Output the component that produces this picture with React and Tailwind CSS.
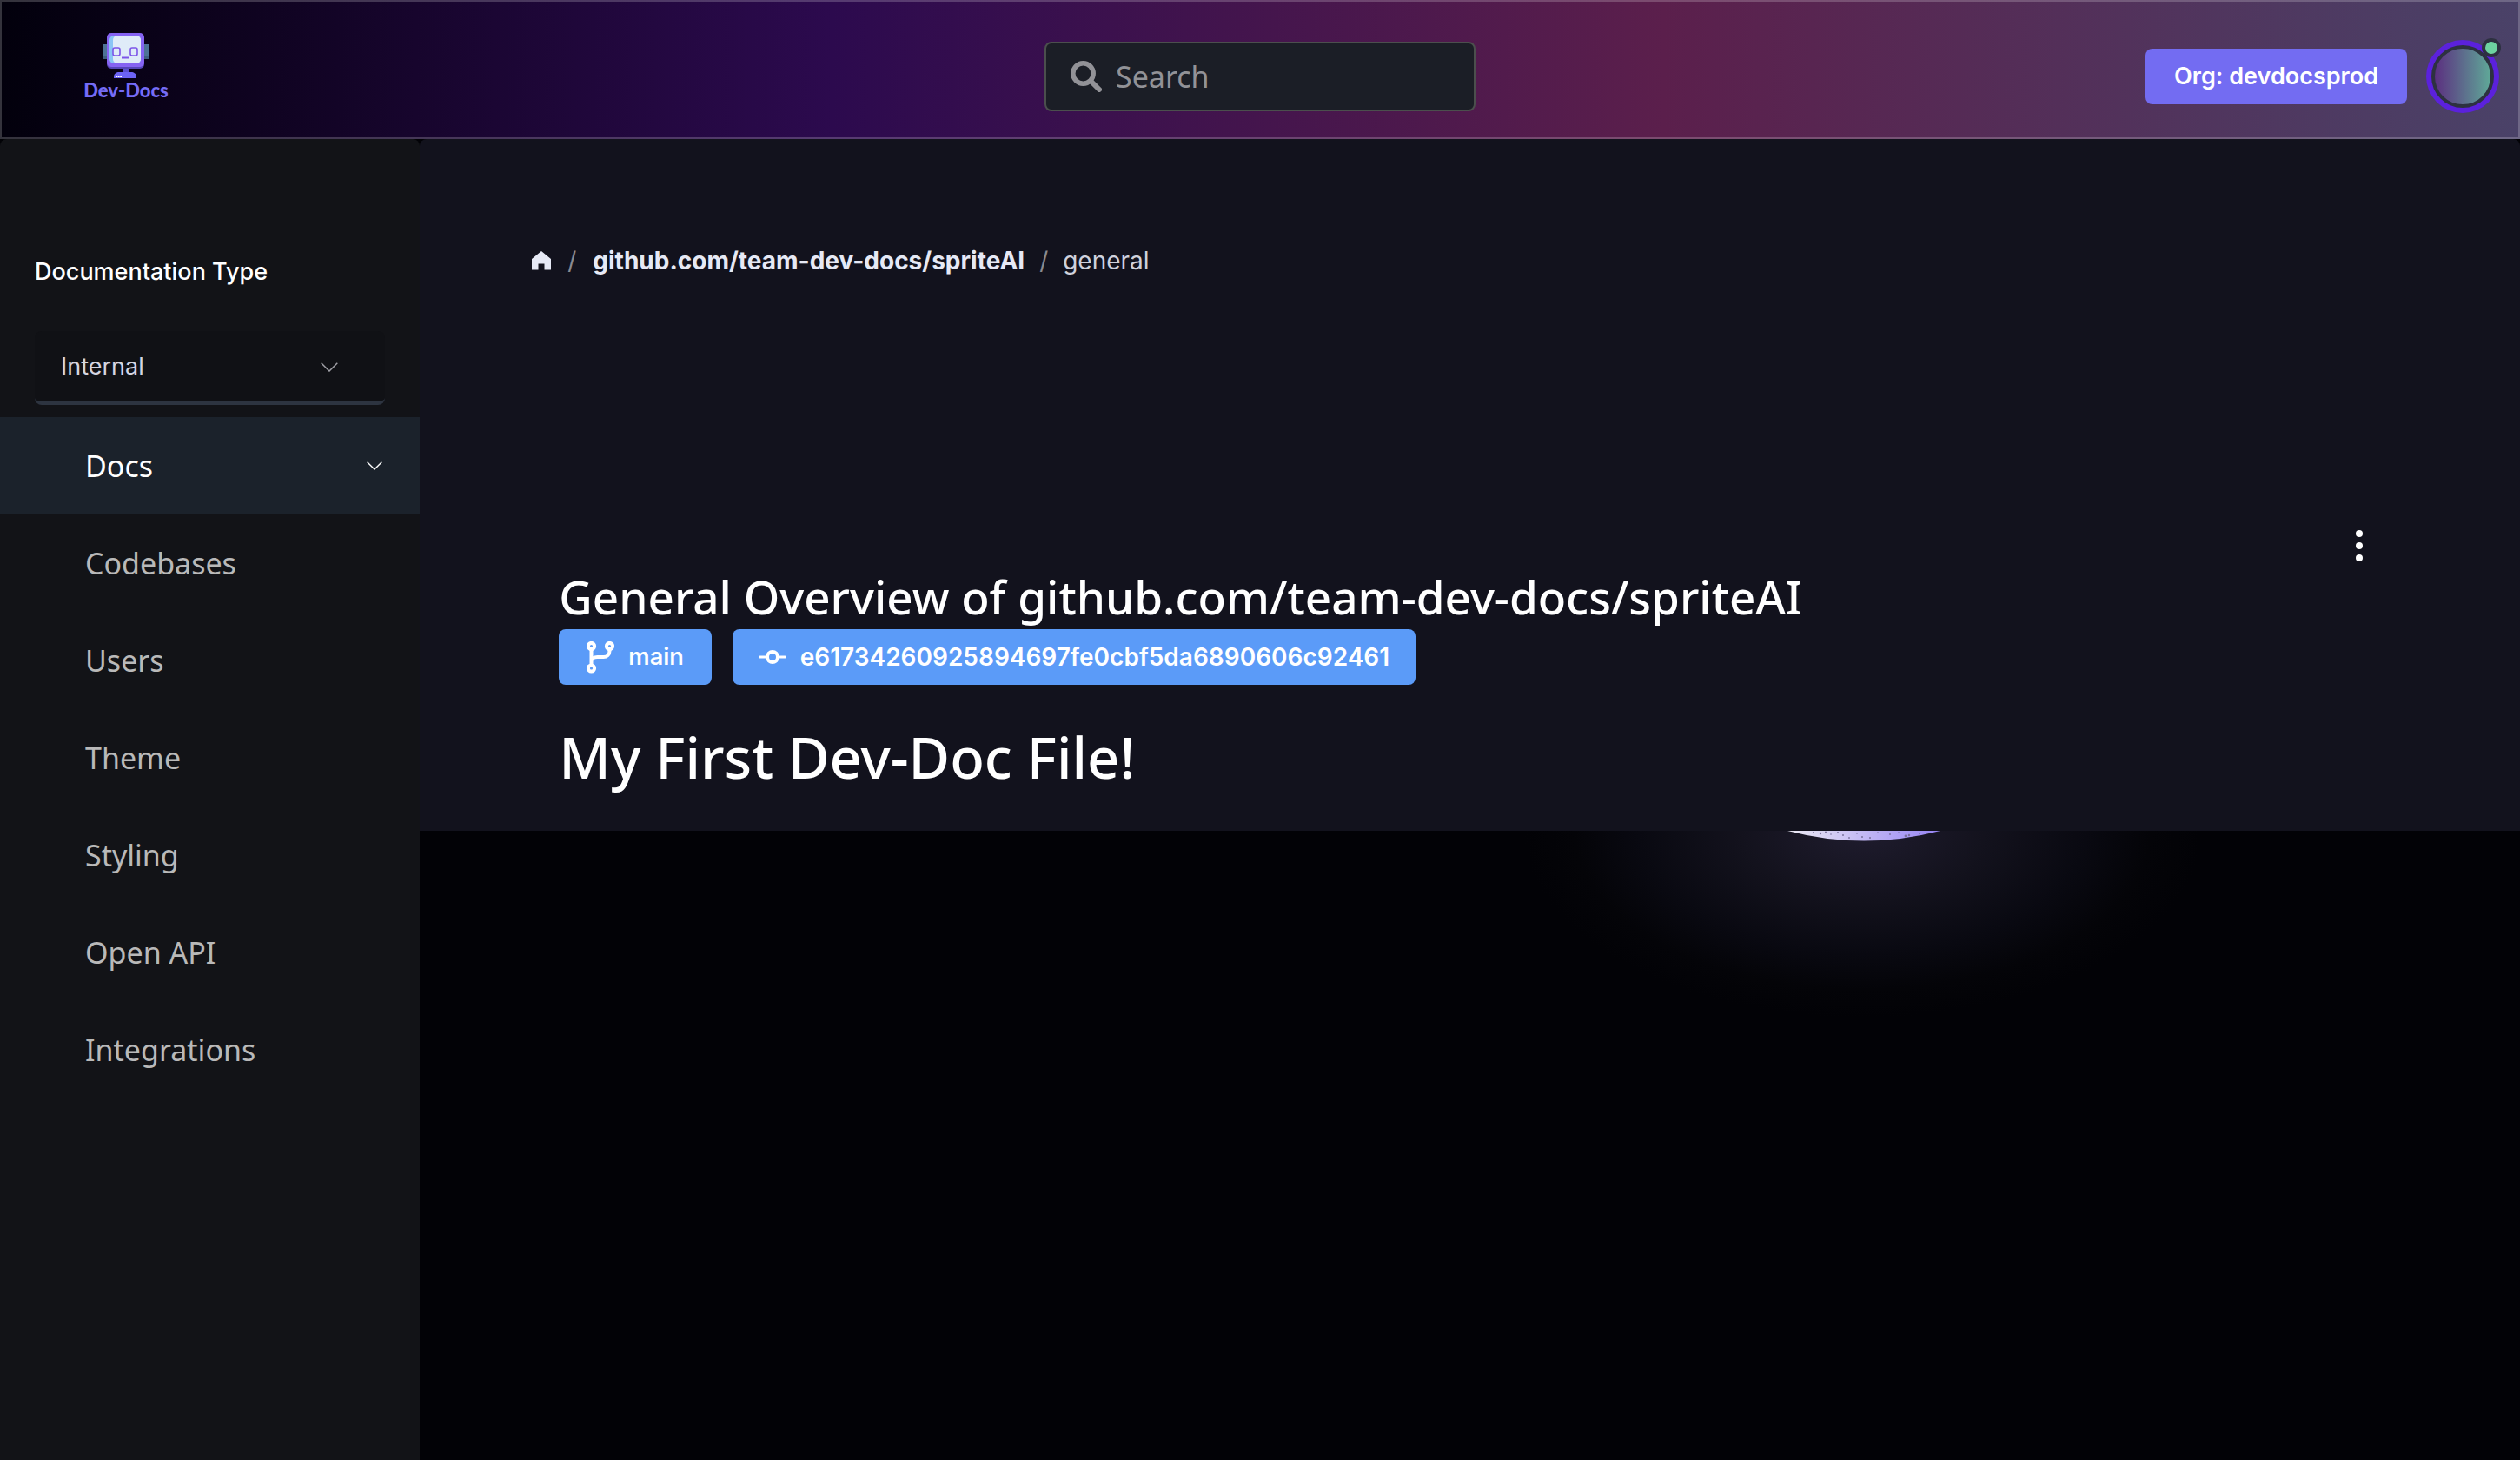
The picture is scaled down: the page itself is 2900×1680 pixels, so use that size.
import React from "react";

const navItems = ["Codebases", "Users", "Theme", "Styling", "Open API", "Integrations"];

function Logo() {
  return (
    <a href="#" className="ml-[72px] flex w-[98px] flex-col items-center text-[#756cf6]">
      <svg viewBox="0 0 54 52" className="h-[52px] w-[54px]" aria-hidden="true">
        <rect x="0" y="13" width="6" height="17" fill="#3f5f80" />
        <rect x="48" y="13" width="6" height="17" fill="#3f5f80" />
        <rect x="0" y="13" width="6" height="13" fill="#4d7396" />
        <rect x="48" y="13" width="6" height="13" fill="#4d7396" />
        <rect x="5" y="2" width="43" height="39" rx="5" fill="#5546b8" />
        <rect x="5" y="0" width="43" height="39" rx="5" fill="#8563f2" />
        <rect x="8" y="3" width="36" height="32" rx="5" fill="#8ac4f5" />
        <rect x="12" y="3" width="32" height="32" rx="5" fill="#dfebf8" />
        <rect x="12" y="17" width="8" height="9" rx="2" fill="none" stroke="#7d55e8" strokeWidth="1.6" />
        <rect x="32" y="17" width="8" height="9" rx="2" fill="none" stroke="#7d55e8" strokeWidth="1.6" />
        <rect x="22" y="27.5" width="8" height="2" fill="#7d55e8" />
        <rect x="23" y="41" width="7" height="6" fill="#5b4fd0" />
        <path d="M13 52v-2c0-3 3-5 6-5h14c3 0 6 2 6 5v2z" fill="#6d63f5" />
        <path d="M15 50h7" stroke="#fff" strokeWidth="2" strokeDasharray="2 .6" />
      </svg>
      <span className="font-['Lato'] text-[22px] leading-[28px] font-black whitespace-nowrap">Dev-Docs</span>
    </a>
  );
}

function Chevron({ className }) {
  return (
    <svg viewBox="0 0 20 11" className={className} fill="none" stroke="currentColor" strokeWidth="1.5" aria-hidden="true">
      <path d="M.7.7 10 10 19.3.7" />
    </svg>
  );
}

function Header() {
  return (
    <header className="flex h-40 items-center justify-between border-2 border-white/20 bg-[linear-gradient(90deg,#02000c_0%,#2c0a4e_33%,#5b1f4c_66%,#4a4268_100%)] bg-origin-border px-[22px]">
      <div className="flex flex-1 pb-1">
        <Logo />
      </div>
      <label className="mt-4 flex h-20 w-[496px] items-center gap-4 rounded-lg border-2 border-[#4b4f4d] bg-[#1b1e26] px-7 text-[#929297]">
        <svg viewBox="0 0 36 36" className="size-9 shrink-0" fill="none" stroke="currentColor" aria-hidden="true">
          <circle cx="14.5" cy="14.5" r="11.7" strokeWidth="5.5" />
          <path d="m23.5 23.5 9.5 9.5" strokeWidth="6" strokeLinecap="round" />
        </svg>
        <input type="search" aria-label="Search" placeholder="Search" className="w-full min-w-0 bg-transparent text-[34px] outline-none placeholder:text-[#929297]" />
      </label>
      <div className="mt-4 flex flex-1 items-center justify-end gap-[22px] font-['Inter']">
        <button className="h-16 rounded-lg bg-[#736cf2] px-[33px] text-[27px] font-semibold text-white">Org: devdocsprod</button>
        <button aria-label="Account" className="relative size-[84px] rounded-full bg-[#5b21dc] p-[6px]">
          <span className="block size-full rounded-full border-4 border-[#2d3140] bg-[linear-gradient(90deg,#5b2f80,#5fa898)]" />
          <span className="absolute -top-[2px] -right-[2px] size-[22px] rounded-full border-4 border-[#2d3140] bg-[#6dd3a0]" />
        </button>
      </div>
    </header>
  );
}

function Sidebar() {
  return (
    <aside className="w-1/6 shrink-0 rounded-t-lg bg-[#121317] pt-[133px]">
      <div className="px-10 font-['Inter']">
        <label htmlFor="doc-type" className="block text-[27px] leading-10 font-medium text-white">Documentation Type</label>
        <div className="relative mt-12 mb-[14px]">
          <select id="doc-type" className="h-[85px] w-full appearance-none rounded-lg border-b-4 border-[#2d3440] bg-[#101115] pt-[2px] pl-[30px] text-[27px] text-[#d5d5e0]">
            <option>Internal</option>
          </select>
          <Chevron className="pointer-events-none absolute top-9 right-[54px] h-[11px] w-5 text-[#a0a0a6]" />
        </div>
      </div>
      <nav className="flex flex-col text-[34px]">
        <a href="#" className="flex h-28 items-center justify-between bg-[#1b222b] pr-[43px] pl-[98px] text-white">
          Docs
          <Chevron className="h-[10px] w-[18px]" />
        </a>
        {navItems.map((item) => (
          <a key={item} href="#" className="flex h-28 items-center pl-[98px] text-[#b9b9b9]">{item}</a>
        ))}
      </nav>
    </aside>
  );
}

function Breadcrumbs() {
  return (
    <nav aria-label="Breadcrumb" className="flex items-center font-['Inter'] text-[28px] leading-10 text-[#e6e9f5]">
      <a href="#" aria-label="Home">
        <svg viewBox="0 0 22 22" className="size-[22px]" fill="currentColor" aria-hidden="true">
          <path d="M11 0 0 9v12.5h7.5V14.5h7v7H22V9z" />
        </svg>
      </a>
      <span className="w-12 text-center text-[#8a8a90]">/</span>
      <a href="#" className="font-bold">github.com/team-dev-docs/spriteAI</a>
      <span className="w-11 text-center text-[#8a8a90]">/</span>
      <span className="text-[#cfd1dc]">general</span>
    </nav>
  );
}

function Article() {
  return (
    <section className="rounded-t-lg bg-[#12121d] pt-[120px] pr-[175px] pb-[38px] pl-[129px]">
      <Breadcrumbs />
      <div className="mt-[290px] flex justify-end">
        <button aria-label="More options" className="flex h-9 w-5 justify-center text-white">
          <svg viewBox="0 0 8 36" className="h-9 w-2" fill="currentColor" aria-hidden="true">
            <circle cx="4" cy="4" r="4" />
            <circle cx="4" cy="18" r="4" />
            <circle cx="4" cy="32" r="4" />
          </svg>
        </button>
      </div>
      <div className="pl-[31px] text-white">
        <h2 className="pt-1 text-[53px] leading-[74px] font-medium">General Overview of github.com/team-dev-docs/spriteAI</h2>
        <div className="flex gap-6 font-['Inter'] text-[27px] font-semibold">
          <button className="flex h-16 items-center gap-4 rounded-lg bg-[#5b9bf8] px-8">
            <svg viewBox="0 0 32 37" className="h-[37px] w-8" fill="none" stroke="currentColor" strokeWidth="4" aria-hidden="true">
              <circle cx="5.5" cy="5.5" r="3.6" />
              <circle cx="26.5" cy="5.5" r="3.6" />
              <circle cx="5.5" cy="31" r="3.6" />
              <path d="M5.5 9v18M26.5 9v2c0 4-3 7-7 7h-7c-4 0-7 2-7 5" />
            </svg>
            main
          </button>
          <button className="flex h-16 items-center gap-4 rounded-lg bg-[#5b9bf8] px-[30px] text-[28px]">
            <svg viewBox="0 0 32 16" className="h-4 w-8" fill="none" stroke="currentColor" strokeWidth="4" aria-hidden="true">
              <circle cx="16" cy="8" r="6" />
              <path d="M1.5 8H9M23 8h7.5" strokeWidth="3" strokeLinecap="round" />
            </svg>
            e61734260925894697fe0cbf5da6890606c92461
          </button>
        </div>
        <h1 className="mt-[38px] pb-[2px] text-[65px] leading-[90px] font-medium">My First Dev-Doc File!</h1>
      </div>
    </section>
  );
}

const craters = [
  [30, 2, 1], [38, 3, 1.2], [44, 1.5, 1], [50, 4, 0.8], [58, 2, 1], [64, 5, 1], [71, 8, 0.9],
  [80, 3, 0.8], [86, 7, 1], [95, 8, 1], [104, 2, 0.8], [118, 4, 0.9], [128, 2, 0.8], [136, 6, 1.4], [140, 5, 1.2], [152, 3, 0.9],
];

function MoonBackdrop() {
  return (
    <div className="flex-1 overflow-hidden bg-[#020206] bg-[radial-gradient(390px_215px_at_68.7%_0,#1f1c2e_0%,#13121d_36%,#090911_66%,#040408_85%,#020206_100%)]">
      <svg viewBox="0 0 176 12" className="ml-[65.1%] h-3 w-[176px]" aria-hidden="true">
        <defs>
          <linearGradient id="moon">
            <stop offset="0" stopColor="#eceaf4" />
            <stop offset="0.4" stopColor="#cbc3f4" />
            <stop offset="1" stopColor="#9684f5" />
          </linearGradient>
        </defs>
        <path d="M0 0q88 23 176 0z" fill="url(#moon)" />
        {craters.map(([x, y, r]) => (
          <circle key={x} cx={x} cy={y} r={r} fill="#7a729e" />
        ))}
      </svg>
    </div>
  );
}

export default function App() {
  return (
    <div className="flex min-h-screen flex-col bg-[#020206] font-['Noto_Sans',sans-serif]">
      <Header />
      <div className="flex flex-1">
        <Sidebar />
        <main className="flex min-w-0 flex-1 flex-col">
          <Article />
          <MoonBackdrop />
        </main>
      </div>
    </div>
  );
}
